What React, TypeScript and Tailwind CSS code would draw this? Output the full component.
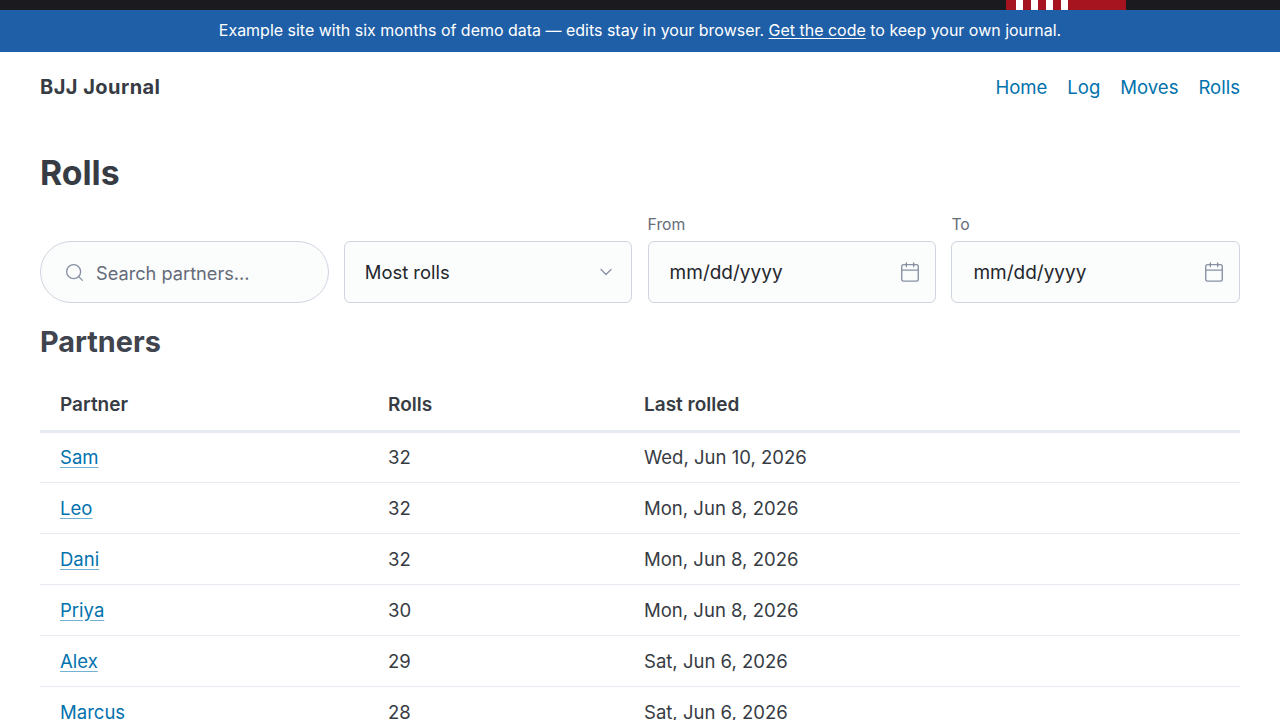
import { Calendar, ChevronDown, Search } from 'lucide-react';

const ROWS = [
  { name: 'Sam', rolls: 32, last: 'Wed, Jun 10, 2026' },
  { name: 'Leo', rolls: 32, last: 'Mon, Jun 8, 2026' },
  { name: 'Dani', rolls: 32, last: 'Mon, Jun 8, 2026' },
  { name: 'Priya', rolls: 30, last: 'Mon, Jun 8, 2026' },
  { name: 'Alex', rolls: 29, last: 'Sat, Jun 6, 2026' },
  { name: 'Marcus', rolls: 28, last: 'Sat, Jun 6, 2026' },
];

const NAV = ['Home', 'Log', 'Moves', 'Rolls'];

function DateField({ label }: { label: string }) {
  return (
    <div className="flex flex-col">
      <label className="text-[15.75px] leading-[24px] mb-[4px] text-[#646b79]">{label}</label>
      <div className="relative">
        <input
          type="text"
          placeholder="mm/dd/yyyy"
          className="w-full h-[62px] rounded-[6px] border border-[#cfd5e2] bg-[#fbfcfc] pl-[21px] pr-12 text-[19px] text-[#23262c] placeholder:text-[#23262c] outline-none"
        />
        <Calendar className="absolute right-[15px] top-[20px] text-[#8891a4]" size={22} strokeWidth={1.5} />
      </div>
    </div>
  );
}

export default function App() {
  return (
    <div className="h-screen overflow-hidden bg-white font-['Inter',sans-serif] text-[#373c44]">
      {/* top strip, flag sits at the right */}
      <div className="h-[10px] bg-[#1a1a1f] pl-[1006px]">
        <div className="flex h-full w-[120px] bg-[#a5141f] pl-[10px] gap-[8px]">
          <span className="w-[7px] bg-white" />
          <span className="w-[7px] bg-white" />
          <span className="w-[7px] bg-white" />
          <span className="w-[7px] bg-white" />
        </div>
      </div>

      <div className="flex h-[42px] items-center justify-center bg-[#1f5fa8] text-[15.98px] text-white">
        <p>
          Example site with six months of demo data — edits stay in your browser.{' '}
          <a href="#" className="underline underline-offset-2">Get the code</a> to keep your own journal.
        </p>
      </div>

      <nav className="flex h-[70px] items-center justify-between px-10">
        <strong className="text-[20px] font-bold tracking-[0.45px]">BJJ Journal</strong>
        <ul className="flex gap-5 pt-[2px] text-[18.55px] text-[#0172ad]">
          {NAV.map((item) => (
            <li key={item}>
              <a href="#">{item}</a>
            </li>
          ))}
        </ul>
      </nav>

      <main className="px-10">
        <h1 className="mt-[31px] text-[33.75px] leading-[40px] font-bold">Rolls</h1>

        <div className="mt-[20px] grid grid-cols-4 gap-x-[15.2px] items-end">
          <div className="relative">
            <Search className="absolute left-[23.5px] top-[21px] text-[#8891a4]" size={21} strokeWidth={1.5} />
            <input
              type="search"
              placeholder="Search partners..."
              className="w-full h-[62px] rounded-full border border-[#cfd5e2] bg-[#fbfcfc] pl-[55px] pr-4 pt-[2px] text-[18.2px] text-[#23262c] placeholder:text-[#646b79] outline-none"
            />
          </div>
          <div className="relative">
            <select className="w-full h-[62px] appearance-none rounded-[6px] border border-[#cfd5e2] bg-[#fbfcfc] pl-[20px] pr-12 pt-[2px] text-[18.4px] text-[#23262c] outline-none">
              <option>Most rolls</option>
              <option>Recent</option>
            </select>
            <ChevronDown className="absolute right-[16px] top-[21px] text-[#8891a4]" size={20} strokeWidth={1.5} />
          </div>
          <DateField label="From" />
          <DateField label="To" />
        </div>

        <h2 className="mt-[21px] text-[28.8px] leading-[36px] font-bold text-[#40444e]">Partners</h2>

        <table className="mt-[17px] w-full table-fixed border-collapse text-[18.55px]">
          <colgroup>
            <col className="w-[328px]" />
            <col className="w-[256px]" />
            <col />
          </colgroup>
          <thead>
            <tr className="h-[54px] border-b-[3px] border-[#e7eaf0] text-left text-[19px]">
              <th className="px-5 pt-[4px] font-semibold">Partner</th>
              <th className="px-5 pt-[4px] font-semibold">Rolls</th>
              <th className="px-5 pt-[4px] font-semibold">Last rolled</th>
            </tr>
          </thead>
          <tbody className="text-[#373c44]">
            {ROWS.map((row) => (
              <tr key={row.name} className="h-[51px] border-b border-[#e7eaf0]">
                <td className="px-5 pt-[2px]">
                  <a href="#" className="text-[#0172ad] underline decoration-[#72b3d3] underline-offset-[3px]">{row.name}</a>
                </td>
                <td className="px-5 pt-[2px]">{row.rolls}</td>
                <td className="px-5 pt-[2px]">{row.last}</td>
              </tr>
            ))}
          </tbody>
        </table>
      </main>
    </div>
  );
}
